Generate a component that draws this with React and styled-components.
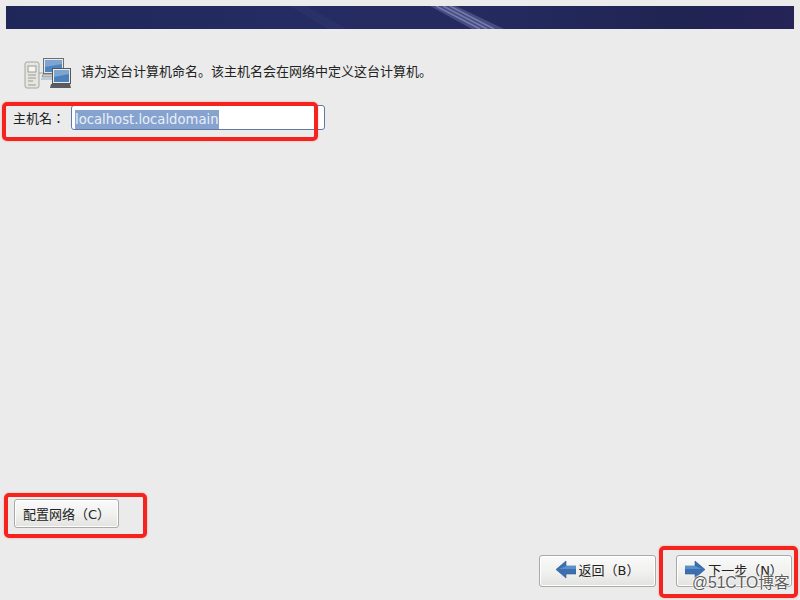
import styled, { createGlobalStyle } from "styled-components";

const Global = createGlobalStyle`
  html, body {
    margin: 0;
    padding: 0;
    background: #ebebeb;
  }
`;

const Page = styled.div`
  position: relative;
  width: 800px;
  height: 600px;
  overflow: hidden;
  display: flex;
  flex-direction: column;
  padding: 6px 6px 13px;
  box-sizing: border-box;
  background: #ebebeb;
  font-family: "DejaVu Sans", "Noto Sans CJK SC", sans-serif;
  color: #222;
`;

const Banner = styled.div`
  position: relative;
  height: 23px;
  flex: none;
  overflow: hidden;
  background: linear-gradient(90deg, #1f2658 0%, #252c63 35%, #252b60 60%, #1f2452 85%, #252357 100%);
`;

const Intro = styled.div`
  display: flex;
  align-items: center;
  margin: 26px 0 0 17px;
  height: 36px;
  font-size: 13px;
`;

const IntroText = styled.span`
  margin-left: 10px;
  position: relative;
  top: -3px;
`;

const HostRow = styled.div`
  display: flex;
  align-items: center;
  margin: 14px 0 0 7px;
  font-size: 13px;
`;

const HostLabel = styled.label`
  width: 58px;
  flex: none;
  font-family: "DejaVu Sans", "Noto Sans CJK TC", sans-serif;
`;

const HostInput = styled.div`
  width: 254px;
  height: 25px;
  box-sizing: border-box;
  border: 1px solid #5f79a3;
  border-radius: 3px;
  background: #fff;
  padding: 3px 3px 0;
  display: flex;
  align-items: center;
  font-size: 13.2px;
`;

const Selected = styled.span`
  background: #86a3cf;
  color: #e9eff8;
  line-height: 19px;
`;

const Spacer = styled.div`
  flex: 1;
`;

const Button = styled.button`
  display: flex;
  align-items: center;
  justify-content: center;
  gap: 3px;
  box-sizing: border-box;
  width: ${(p) => p.$w}px;
  height: ${(p) => p.$h}px;
  padding: 0 0 ${(p) => p.$lift}px;
  border: 1px solid #a9a9a6;
  border-radius: 3px;
  background: linear-gradient(180deg, #fafafa 0%, #f0f0ef 55%, #e2e2e0 100%);
  box-shadow: inset 0 0 0 1px #fff;
  font-family: inherit;
  font-size: 13px;
  color: #222;
`;

const ConfigRow = styled.div`
  display: flex;
  margin-left: 8px;
`;

const Footer = styled.div`
  display: flex;
  justify-content: flex-end;
  gap: 20px;
  margin: 27px 2px 0 0;
`;

const Mark = styled.div`
  position: absolute;
  box-sizing: border-box;
  left: ${(p) => p.$x}px;
  top: ${(p) => p.$y}px;
  width: ${(p) => p.$w}px;
  height: ${(p) => p.$h}px;
  border: 4px solid #f5231d;
  border-radius: 5px;
  box-shadow: 0 0 2px rgba(245, 35, 29, 0.4);
`;

const Watermark = styled.div`
  position: absolute;
  left: 692px;
  top: 574px;
  font-family: "Liberation Sans", "Noto Sans CJK SC", sans-serif;
  font-size: 15.7px;
  line-height: 18px;
  color: rgba(50, 50, 50, 0.8);
  text-shadow: 0 0 2px #fff, 0 0 2px #fff;
  white-space: nowrap;
`;

function Streak() {
  return (
    <svg width="788" height="23" viewBox="0 0 788 23" style={{ display: "block" }}>
      <polygon points="284,0 300,0 341,23 322,23" fill="#3a4178" opacity="0.25" />
      <polygon points="424,0 450,0 498,23 466,23" fill="#4f568c" opacity="0.8" />
      <path d="M430 0L474 23M437 0L481 23M444 0L488 23" stroke="#8f95bd" strokeWidth="1.6" opacity="0.65" />
    </svg>
  );
}

function ComputersIcon() {
  return (
    <svg width="48" height="36" viewBox="0 0 48 36">
      <path d="M16 18H30M18 24H30" stroke="#a9c2dc" strokeWidth="1.5" />
      <rect x="2" y="7" width="14" height="26" rx="2" fill="#e6e6e0" stroke="#a5a59e" />
      <rect x="5" y="11" width="8" height="6" fill="#f5f5f2" stroke="#9a9a94" />
      <path d="M5 20H13M5 23H13M5 26H10M5 30H13" stroke="#9a9a94" strokeWidth="1.2" />
      <rect x="20.5" y="3.5" width="20" height="15" fill="#e8e8e8" stroke="#6d6f72" />
      <rect x="22" y="5" width="17" height="12" fill="#4f85bd" />
      <path d="M22 5H39V9L22 12Z" fill="#7ba6d2" />
      <path d="M20 19H30L31 22H19Z" fill="#c9c9c6" stroke="#77787a" strokeWidth="0.6" />
      <rect x="29.5" y="13.5" width="18" height="15" fill="#ececec" stroke="#55575a" />
      <rect x="31" y="15" width="15" height="12" fill="#4b80b8" />
      <path d="M31 15H46V19L31 22Z" fill="#7ba6d2" />
      <path d="M28 29H47L48 33H27Z" fill="#5a5c5f" />
    </svg>
  );
}

function LeftArrow() {
  return (
    <svg width="20" height="19" viewBox="0 0 20 19">
      <path d="M0 9.5L10 1V6H20V14H10V18Z" fill="#3b6fb0" stroke="#2c5a96" strokeWidth="0.6" />
      <path d="M10 6H20V9H3Z" fill="#5c90cb" />
    </svg>
  );
}

function RightArrow() {
  return (
    <svg width="20" height="19" viewBox="0 0 20 19">
      <path d="M20 9.5L10 1V6H0V14H10V18Z" fill="#3b6fb0" stroke="#2c5a96" strokeWidth="0.6" />
      <path d="M10 6H0V9H17Z" fill="#5c90cb" />
    </svg>
  );
}

export default function App() {
  return (
    <>
      <Global />
      <Page>
        <Banner>
          <Streak />
        </Banner>
        <Intro>
          <ComputersIcon />
          <IntroText>请为这台计算机命名。该主机名会在网络中定义这台计算机。</IntroText>
        </Intro>
        <HostRow>
          <HostLabel>主机名：</HostLabel>
          <HostInput>
            <Selected>localhost.localdomain</Selected>
          </HostInput>
        </HostRow>
        <Spacer />
        <ConfigRow>
          <Button $w={105} $h={29} $lift={0}>配置网络（C）</Button>
        </ConfigRow>
        <Footer>
          <Button $w={117} $h={32} $lift={3}>
            <LeftArrow />
            返回（B）
          </Button>
          <Button $w={116} $h={32} $lift={3}>
            <RightArrow />
            下一步（N）
          </Button>
        </Footer>
        <Mark $x={2} $y={102} $w={316} $h={39} />
        <Mark $x={4} $y={493} $w={143} $h={45} />
        <Mark $x={659} $y={546} $w={139} $h={52} />
        <Watermark>@51CTO博客</Watermark>
      </Page>
    </>
  );
}
